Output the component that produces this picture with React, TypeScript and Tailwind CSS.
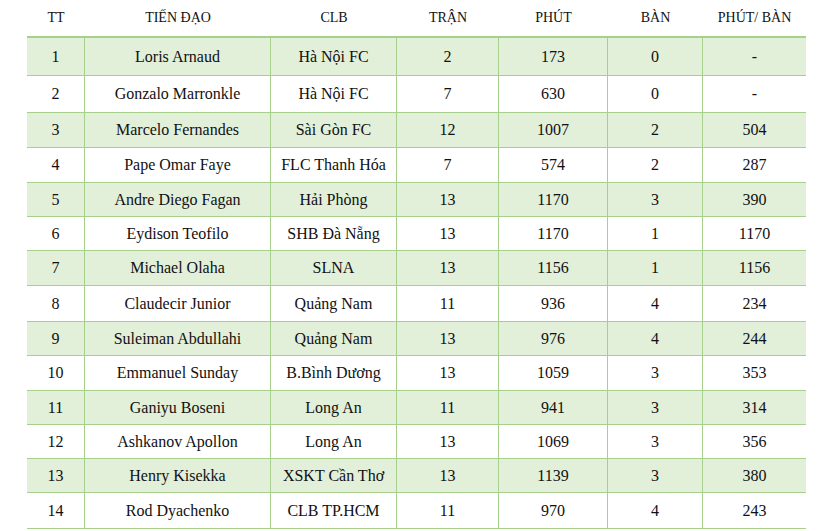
import React from "react";

const rows: [string, string, string, string, string, string, string][] = [
  ["1", "Loris Arnaud", "Hà Nội FC", "2", "173", "0", "-"],
  ["2", "Gonzalo Marronkle", "Hà Nội FC", "7", "630", "0", "-"],
  ["3", "Marcelo Fernandes", "Sài Gòn FC", "12", "1007", "2", "504"],
  ["4", "Pape Omar Faye", "FLC Thanh Hóa", "7", "574", "2", "287"],
  ["5", "Andre Diego Fagan", "Hải Phòng", "13", "1170", "3", "390"],
  ["6", "Eydison Teofilo", "SHB Đà Nẵng", "13", "1170", "1", "1170"],
  ["7", "Michael Olaha", "SLNA", "13", "1156", "1", "1156"],
  ["8", "Claudecir Junior", "Quảng Nam", "11", "936", "4", "234"],
  ["9", "Suleiman Abdullahi", "Quảng Nam", "13", "976", "4", "244"],
  ["10", "Emmanuel Sunday", "B.Bình Dương", "13", "1059", "3", "353"],
  ["11", "Ganiyu Boseni", "Long An", "11", "941", "3", "314"],
  ["12", "Ashkanov Apollon", "Long An", "13", "1069", "3", "356"],
  ["13", "Henry Kisekka", "XSKT Cần Thơ", "13", "1139", "3", "380"],
  ["14", "Rod Dyachenko", "CLB TP.HCM", "11", "970", "4", "243"],
];

const heights = [
  "h-[38px]", "h-[37px]", "h-[35px]", "h-[35px]", "h-[34px]", "h-[34px]", "h-[35px]",
  "h-[36px]", "h-[34px]", "h-[35px]", "h-[34px]", "h-[34px]", "h-[34px]", "h-[36px]",
];

const headers = ["TT", "TIẾN ĐẠO", "CLB", "TRẬN", "PHÚT", "BÀN", "PHÚT/ BÀN"];

const cols = "grid grid-cols-[58px_186px_126px_102px_109px_95px_103px]";

export default function App() {
  return (
    <div className="w-[839px] h-[531px] bg-white overflow-hidden text-[#111] font-['Liberation_Serif','DejaVu_Serif',serif]">
      <div className="ml-[27px] w-[779px]">
        <div className={`${cols} h-[36px] text-[14px]`}>
          {headers.map((h, i) => (
            <div key={i} className="flex items-center justify-center pb-[2px]">
              {h}
            </div>
          ))}
        </div>
        <div className="border-t-2 border-[#a8d08d]">
          {rows.map((r, ri) => (
            <div
              key={ri}
              className={`${cols} ${heights[ri]} border-b border-[#a8d08d] text-[16px] ${
                ri % 2 === 0 ? "bg-[#e2efd9]" : "bg-white"
              }`}
            >
              {r.map((c, ci) => (
                <div
                  key={ci}
                  className={`flex items-center justify-center ${
                    ci < 6 ? "border-r border-[#a8d08d]" : ""
                  }`}
                >
                  {c}
                </div>
              ))}
            </div>
          ))}
        </div>
      </div>
    </div>
  );
}
